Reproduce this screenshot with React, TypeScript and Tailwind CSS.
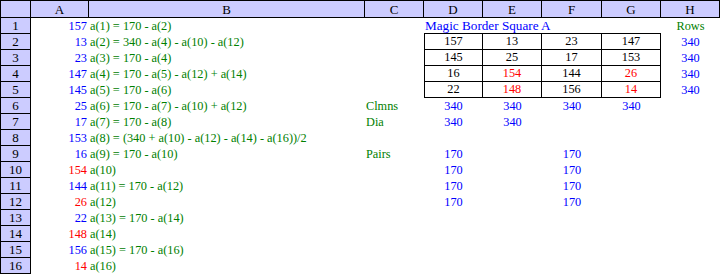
type Cell = {
  t: string;
  c?: string;
  al?: 'l' | 'c' | 'r';
  big?: boolean;
} | null;

const BLUE = 'text-[#0000ff]';
const RED = 'text-[#ff0000]';
const GREEN = 'text-[#008000]';
const BLACK = 'text-black';

const n = (t: string, c = BLUE): Cell => ({ t, c, al: 'r' });
const f = (t: string): Cell => ({ t, c: GREEN, al: 'l' });
const m = (t: string, c = BLACK): Cell => ({ t, c, al: 'c' });
const lbl = (t: string): Cell => ({ t, c: GREEN, al: 'l' });

// columns A..H per row
const rows: Cell[][] = [
  [n('157'), f('a(1) = 170 - a(2)'), null, { t: 'Magic Border Square A', c: BLUE, al: 'l', big: true }, null, null, null, m('Rows', GREEN)],
  [n('13'), f('a(2) = 340 - a(4) - a(10) - a(12)'), null, m('157'), m('13'), m('23'), m('147'), m('340', BLUE)],
  [n('23'), f('a(3) = 170 - a(4)'), null, m('145'), m('25'), m('17'), m('153'), m('340', BLUE)],
  [n('147'), f('a(4) = 170 - a(5) - a(12) + a(14)'), null, m('16'), m('154', RED), m('144'), m('26', RED), m('340', BLUE)],
  [n('145'), f('a(5) = 170 - a(6)'), null, m('22'), m('148', RED), m('156'), m('14', RED), m('340', BLUE)],
  [n('25'), f('a(6) = 170 - a(7) - a(10) + a(12)'), lbl('Clmns'), m('340', BLUE), m('340', BLUE), m('340', BLUE), m('340', BLUE), null],
  [n('17'), f('a(7) = 170 - a(8)'), lbl('Dia'), m('340', BLUE), m('340', BLUE), null, null, null],
  [n('153'), f('a(8) = (340 + a(10) - a(12) - a(14) - a(16))/2'), null, null, null, null, null, null],
  [n('16'), f('a(9) = 170 - a(10)'), lbl('Pairs'), m('170', BLUE), null, m('170', BLUE), null, null],
  [n('154', RED), f('a(10)'), null, m('170', BLUE), null, m('170', BLUE), null, null],
  [n('144'), f('a(11) = 170 - a(12)'), null, m('170', BLUE), null, m('170', BLUE), null, null],
  [n('26', RED), f('a(12)'), null, m('170', BLUE), null, m('170', BLUE), null, null],
  [n('22'), f('a(13) = 170 - a(14)'), null, null, null, null, null, null],
  [n('148', RED), f('a(14)'), null, null, null, null, null, null],
  [n('156'), f('a(15) = 170 - a(16)'), null, null, null, null, null, null],
  [n('14', RED), f('a(16)'), null, null, null, null, null, null],
];

const cols = ['A', 'B', 'C', 'D', 'E', 'F', 'G', 'H'];

function boxClass(r: number, ci: number) {
  // ci: 0=A .. 7=H ; square lives in D..G (3..6), rows 2..5 (index 1..4)
  if (ci < 3 || ci > 6) return '';
  if (r === 0) return 'border-b border-black';
  if (r >= 1 && r <= 4) return 'border-b border-r border-black' + (ci === 3 ? ' border-l' : '');
  return '';
}

export default function App() {
  return (
    <div className="w-[721px] h-[277px] bg-white [font-family:'Liberation_Serif',serif] text-[12.3px] overflow-hidden">
      <div className="grid grid-cols-[31px_58px_276px_59px_59px_59px_60px_59px_59px] w-[720px]">
        <div className="h-[18px] bg-[#ccccff] border border-black" />
        {cols.map((c) => (
          <div key={c} className="h-[18px] bg-[#ccccff] border-y border-r border-black flex items-center justify-center leading-none text-black text-[13px]">
            {c}
          </div>
        ))}

        {rows.map((row, r) => (
          <div key={r} className="contents">
            <div className="h-4 bg-[#ccccff] border-x border-b border-black flex items-center justify-center leading-none text-black text-[13px]">
              {r + 1}
            </div>
            {row.map((cell, ci) => (
              <div
                key={ci}
                className={`h-4 flex items-center whitespace-nowrap leading-none ${boxClass(r, ci)} ${
                  cell?.al === 'r' ? 'justify-end pr-[2px]' : cell?.al === 'c' ? 'justify-center' : 'justify-start pl-px'
                } ${cell?.c ?? ''} ${cell?.big ? 'text-[13.2px]' : ''}`}
              >
                {cell?.t}
              </div>
            ))}
          </div>
        ))}
      </div>
    </div>
  );
}
